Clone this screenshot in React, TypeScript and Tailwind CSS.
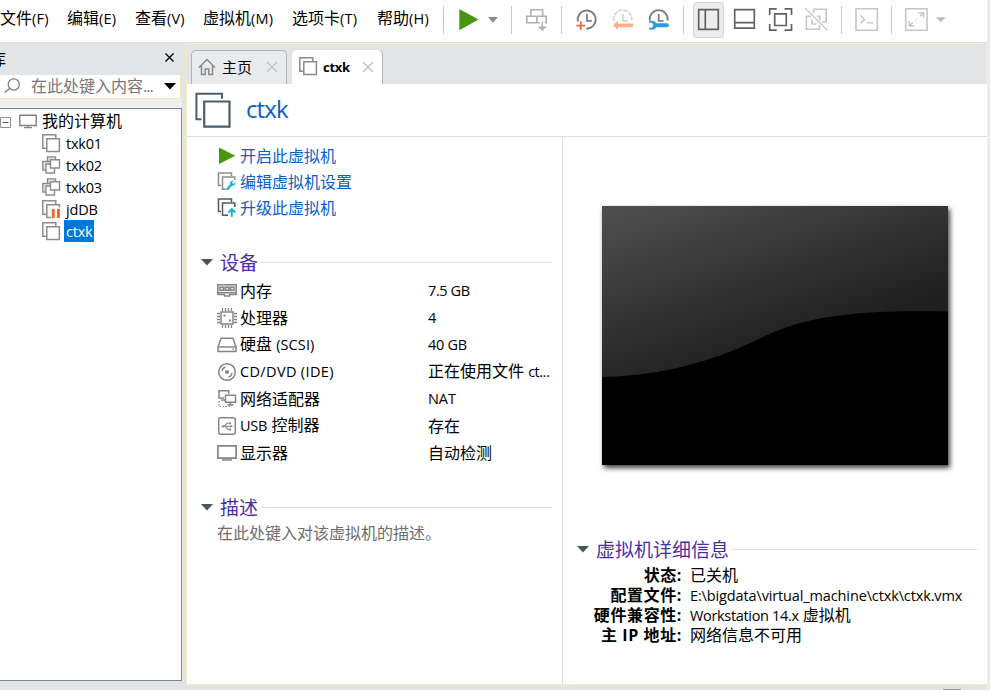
import type { ReactNode } from "react";

type Box = { x: number; y: number; w: number; h: number; children: ReactNode; className?: string };

/** Drawing surface whose units are window pixels. */
function Glyph({ x, y, w, h, children, className = "" }: Box) {
  return (
    <svg
      width={w}
      height={h}
      viewBox={`${x} ${y} ${w} ${h}`}
      fill="none"
      className={`block shrink-0 ${className}`}
    >
      {children}
    </svg>
  );
}

function Sep() {
  return <div className="mt-1.5 h-7 w-px shrink-0 bg-[#c9c9c9]" />;
}

const menus = [
  { text: "文件", key: "(F)", cls: "w-[67px]" },
  { text: "编辑", key: "(E)", cls: "w-[68px]" },
  { text: "查看", key: "(V)", cls: "w-[68px]" },
  { text: "虚拟机", key: "(M)", cls: "w-[89px]" },
  { text: "选项卡", key: "(T)", cls: "w-[85px]" },
  { text: "帮助", key: "(H)", cls: "w-[66px]" },
];

function Toolbar() {
  return (
    <header className="flex h-[42px] shrink-0 bg-white">
      <nav className="flex h-[37px] w-[443px] shrink-0 items-center">
        {menus.map((m) => (
          <div key={m.key} className={`shrink-0 whitespace-nowrap ${m.cls}`}>
            {m.text}
            <span className="text-[14.5px] tracking-[0.2px]">{m.key}</span>
          </div>
        ))}
      </nav>
      <Sep />
      <Glyph x={444} y={0} w={67} h={42}>
        <path d="M459.3 9v21.2L478.5 19.6z" fill="#48960c" />
        <path d="M488 17h10l-5 5.8z" fill="#8b8b8b" />
      </Glyph>
      <Sep />
      <Glyph x={512} y={0} w={49} h={42}>
        <g stroke="#b0b0b0" strokeWidth="1.6">
          <path d="M530.8 16V9.8h11.8V16M526.8 16.2h19.4v6.6h-19.4zM536.8 16.2v6.6" />
          <path d="M542.3 21v9" stroke="#fff" strokeWidth="5" />
          <path d="M542.3 21.5v7" />
        </g>
        <path d="M537.8 26.5h9l-4.5 4.6z" fill="#b0b0b0" />
      </Glyph>
      <Sep />
      <Glyph x={562} y={0} w={121} h={42}>
        <g strokeWidth="1.8">
          <path d="M577.9 21.5a9 9 0 1 1 8.5 7" stroke="#7d7d7d" />
          <path d="M587 14v6.8h4.8" stroke="#7d7d7d" />
          <path d="M580.8 21.3v9M576.4 25.6h8.8" stroke="#e8703a" />
          <path d="M613.8 20.5a9 9 0 1 1 17.8 0" stroke="#d3d3d3" strokeDasharray="4.2 1.2" />
          <path d="M622.8 14v6.8h4.8" stroke="#d3d3d3" />
          <path d="M649.8 20.5a9 9 0 1 1 17.8 0" stroke="#7d7d7d" />
          <path d="M658.7 14v6.8h4.8" stroke="#7d7d7d" />
        </g>
        <path d="M613 25.3l5-4.6v2.9h15v3.6h-15v2.8z" fill="#ffae88" />
        <path
          d="M649 21.2c3.6-1.2 6.6.2 7.4 2.100H667a1.900 1.900 0 0 1 0 3.900H656.400c-.8 2-3.800 3.300-7.400 2.100v-1.600h3.200l1-2.500-1-2.400H649z"
          fill="#2e9ae0"
        />
      </Glyph>
      <Sep />
      <div className="ml-[9px] mt-0.5 h-9 w-[31px] shrink-0 rounded-[4px] border border-[#d0d1d2] bg-[#ecedee]">
        <Glyph x={694} y={3} w={29} h={34}>
          <path d="M698.700 9.700h19.600v19.600h-19.600zM705.300 9.700v19.600" stroke="#636363" strokeWidth="1.7" />
        </Glyph>
      </div>
      <Glyph x={724} y={0} w={117} h={42}>
        <g stroke="#636363" strokeWidth="1.7">
          <path d="M734.700 9.700h19.600v18.400h-19.600zM734.700 22.700h19.600" />
          <path d="M769.700 15V8.900h7M784.500 8.900h7V15M791.500 24v6.200h-7M776.700 30.200h-7V24" />
          <path d="M774.700 13.900h11.600v11.600h-11.600z" />
        </g>
        <g stroke="#c6c6c6" strokeWidth="1.6">
          <path d="M813.500 9.200h12.700v12.600h-4.500M813.500 9.200v4M811 16.300h-4.600v13h13.100v-4.500M817 16.300h2.800v4M812 19.500v4.500h4.500" />
          <path d="M805 8l22.300 22.300" strokeWidth="1.3" />
        </g>
      </Glyph>
      <Sep />
      <Glyph x={842} y={0} w={49} h={42}>
        <g stroke="#c6c6c6" strokeWidth="1.6">
          <path d="M856 8.800h21.400v21.400H856z" />
          <path d="M860.500 15.500l4 4-4 4M867 22.800h6" />
        </g>
      </Glyph>
      <Sep />
      <Glyph x={892} y={0} w={95} h={42}>
        <g stroke="#c6c6c6" strokeWidth="1.6">
          <path d="M905.700 8.800h21.400v21.400h-21.400z" />
          <path d="M918.500 12.800h5v5M909.300 21v5h5M923 13.300l-3 3M909.800 25.500l3-3" />
          <path d="M914.500 20.800l3.500-3" strokeWidth="1" strokeDasharray="1.500 1" />
        </g>
        <path d="M936 17.200h9.600l-4.800 5z" fill="#b8b8b8" />
      </Glyph>
    </header>
  );
}

/** Pair of overlapping sheets, the mark of one virtual machine. */
function VmIcon({ stroke = "#8c8c8c", paused = false }: { stroke?: string; paused?: boolean }) {
  return (
    <Glyph x={0} y={0} w={19} h={19}>
      <path d="M4 14.300H.8V.8h13V4" stroke={stroke} strokeWidth="1.5" />
      <path d="M4.800 4.800h12.600v12.600H4.800z" stroke={stroke} strokeWidth="1.500" fill="#fff" />
      {paused && (
        <>
          <path d="M9 7.500h10V19H9z" fill="#fff" />
          <path d="M9.800 9h2.900v9H9.800zM15 9h2.900v9H15z" fill="#f26a21" />
        </>
      )}
    </Glyph>
  );
}

function CloneIcon() {
  return (
    <Glyph x={0} y={0} w={19} h={19}>
      <g stroke="#8c8c8c" strokeWidth="1.400" fill="#e4e4e4">
        <path d="M5.500.9h8v9h-8z" />
        <path d="M.8 5.500h9.500v8.500H.8z" />
        <path d="M4 8h8.500v9H4z" fill="#fff" />
        <path d="M8.500 3.700h9V12h-9z" fill="#fff" />
      </g>
    </Glyph>
  );
}

const machines = [
  { name: "txk01", icon: <VmIcon /> },
  { name: "txk02", icon: <CloneIcon /> },
  { name: "txk03", icon: <CloneIcon /> },
  { name: "jdDB", icon: <VmIcon paused /> },
  { name: "ctxk", icon: <VmIcon />, selected: true },
];

function Library() {
  return (
    <aside className="flex w-[186px] shrink-0 flex-col border-t border-[#dcddde] pb-[9px]">
      <div className="flex h-[32px] w-full shrink-0 items-center justify-between pr-[12px]">
        <span className="-ml-[10px]">库</span>
        <Glyph x={0} y={0} w={9} h={9} className="-mt-[3px]">
          <path d="M.5.500l8 8M8.500.500l-8 8" stroke="#000" strokeWidth="1.400" />
        </Glyph>
      </div>
      <div className="flex h-6 w-[181px] shrink-0 items-center border-b border-r border-[#f5e6bf] bg-white">
        <Glyph x={0} y={76} w={29} h={21}>
          <circle cx="13.800" cy="84.500" r="5.600" stroke="#808080" strokeWidth="1.300" />
          <path d="M9.800 88.500L4.500 92.500" stroke="#808080" strokeWidth="1.500" />
        </Glyph>
        <span className="ml-[2px] -mt-0.5 whitespace-nowrap leading-5 text-[#767676]">
          在此处键入内容<span className="tracking-[-1px]">...</span>
        </span>
        <svg width="12" height="7" className="ml-auto mr-[4px]">
          <path d="M0 0h12L6 6.500z" fill="#000" />
        </svg>
      </div>
      <div className="h-[9px] w-[182px] shrink-0 bg-[#f0f0f0]" />
      <div className="w-[182px] grow border-b border-r border-t border-[#828790] bg-white pt-px">
        <div className="flex h-[22px] items-center">
          <Glyph x={0} y={110} w={42} h={22}>
            <path d="M.5 117.500h10v10H.5z" stroke="#919191" fill="#fff" />
            <path d="M2.500 122.500h6" stroke="#3f5fae" />
            <path d="M19.800 115.200h16.400v10.300H19.800z" stroke="#808080" strokeWidth="1.400" />
            <path d="M28 125.500v2M24 127.700h8" stroke="#808080" strokeWidth="1.200" />
          </Glyph>
          <span>我的计算机</span>
        </div>
        {machines.map((m) => (
          <div key={m.name} className="flex h-[22px] items-center pl-[42px]">
            {m.icon}
            <span
              className={
                "ml-[3px] h-[22px] pl-[2px] pr-[1px] text-[14.500px] leading-[24px] tracking-[-0.200px] " +
                (m.selected ? "bg-[#0078d7] text-white" : "")
              }
            >
              {m.name}
            </span>
          </div>
        ))}
      </div>
    </aside>
  );
}

function CloseMark() {
  return (
    <svg width="12" height="12" className="block shrink-0">
      <path d="M1 1l10 10M11 1L1 11" stroke="#c4c4c4" strokeWidth="1.500" />
    </svg>
  );
}

function Tabs() {
  return (
    <div className="flex h-10 shrink-0 items-end bg-[#e3e4e6] pl-[4px]">
      <div className="flex h-[34px] w-[96px] items-center rounded-t-[5px] border-x border-t border-[#b4b5b7] bg-[#e9eaec] pb-[2px] pl-[6px]">
        <Glyph x={0} y={0} w={18} h={18}>
          <path
            d="M1 9.500L9 1.500l8 8M3.500 8v8.500h3.700V11h3.600v5.500h3.700V8"
            stroke="#8a8a8a"
            strokeWidth="1.500"
          />
        </Glyph>
        <span className="ml-[6px] w-[30px] whitespace-nowrap text-[15px]">主页</span>
        <div className="ml-[14px]">
          <CloseMark />
        </div>
      </div>
      <div className="ml-[5px] flex h-[34px] w-[91px] items-center rounded-t-[5px] border-r border-[#b4b5b7] bg-white pb-px pl-[7px]">
        <VmIcon />
        <span className="ml-[5px] w-[30px] text-[13px] font-bold tracking-[-0.300px]">ctxk</span>
        <div className="ml-[9px]">
          <CloseMark />
        </div>
      </div>
    </div>
  );
}

function Section({ title, className = "" }: { title: string; className?: string }) {
  return (
    <div className={`flex h-7 shrink-0 items-center ${className}`}>
      <svg width="12" height="7" className="-mt-px mr-[7px] block shrink-0">
        <path d="M0 0h12L6 6.500z" fill="#44565f" />
      </svg>
      <h2 className="whitespace-nowrap text-[19px] leading-7 text-[#4a2ea3]">{title}</h2>
      <div className="-mt-0.5 ml-[3px] h-px grow bg-[#dcdddf]" />
    </div>
  );
}

const actions = [
  {
    label: "开启此虚拟机",
    icon: <path d="M2 1.500v16.500L18.300 9.700z" fill="#48960c" />,
  },
  {
    label: "编辑虚拟机设置",
    icon: (
      <>
        <path d="M4 13.500H1.500V1h13v3M9 17.300H5.500V5h12.300v3" stroke="#8c8c8c" strokeWidth="1.500" />
        <path d="M10.500 17l4-4.500" stroke="#16b3d3" strokeWidth="2.400" strokeLinecap="round" />
        <path d="M18.500 10l-2 2-1.500-1.500 1.700-2c-2.700-.3-4.500 2-3.200 4.800 2.700 1.300 5.500-.5 5-3.300z" fill="#16b3d3" />
      </>
    ),
  },
  {
    label: "升级此虚拟机",
    icon: (
      <>
        <path d="M4 13.500H1.500V1h13v3M11 17.300H5.500V5h12.300v4" stroke="#4a5c68" strokeWidth="1.500" />
        <path d="M14.800 18.800v-7M11.300 14.500l3.500-3.500 3.500 3.500" stroke="#16b3d3" strokeWidth="1.900" />
      </>
    ),
  },
];

const devices = [
  {
    name: <>内存</>,
    value: <span className="text-[14.500px] tracking-[-0.400px]">7.5 GB</span>,
    icon: (
      <>
        <path d="M.800 3.800h18.400v8H.800z" fill="#ededed" />
        <path d="M3 6.300h3.500v2.900H3zM8.300 6.300h3.500v2.900H8.300zM13.500 6.300H17v2.900h-3.500zM1 13.500h6.500v1.500h5v-1.500H19" />
        <path d="M.800 11v3M19.200 11v3" />
      </>
    ),
  },
  {
    name: <>处理器</>,
    value: <span className="text-[14.500px]">4</span>,
    icon: (
      <>
        <path d="M4 4h12v12H4z" />
        <path
          d="M5.500 0v3M8.500 0v3M11.500 0v3M14.500 0v3M5.500 17v3M8.500 17v3M11.500 17v3M14.500 17v3M0 5.500h3M0 8.500h3M0 11.500h3M0 14.500h3M17 5.500h3M17 8.500h3M17 11.500h3M17 14.500h3"
          strokeWidth="1.300"
        />
        <path d="M6.500 7.500h2M12 12.500h2" strokeWidth="2" />
      </>
    ),
  },
  {
    name: (
      <>
        硬盘 <span className="text-[14.500px] tracking-[0.100px]">(SCSI)</span>
      </>
    ),
    value: <span className="text-[14.500px] tracking-[-0.300px]">40 GB</span>,
    icon: (
      <>
        <path d="M1 12L4 3.300h12L19 12v4.500H1zM1 12h18" />
        <path d="M15.500 14.300h1.500" />
      </>
    ),
  },
  {
    name: <span className="text-[14.500px] tracking-[0.350px]">CD/DVD (IDE)</span>,
    value: (
      <>
        正在使用文件 <span className="text-[14.500px] tracking-[-0.500px]">ct...</span>
      </>
    ),
    icon: (
      <>
        <circle cx="10" cy="10" r="8.300" />
        <circle cx="10" cy="10" r="1.200" strokeWidth="1.800" />
        <path d="M5 9a5 5 0 0 1 3.500-4M15 11a5 5 0 0 1-3.500 4" />
      </>
    ),
  },
  {
    name: <>网络适配器</>,
    value: <span className="text-[14.500px] tracking-[-0.100px]">NAT</span>,
    icon: (
      <>
        <path d="M7 9H2V1.800h9.800V5M4 11h4" />
        <path d="M8.500 6.300h10v7h-10zM13.500 13.300v2.500M10.500 16h6" />
        <path d="M2 12v5.500h11" strokeDasharray="1.500 1.500" strokeWidth="1.200" />
      </>
    ),
  },
  {
    name: (
      <>
        <span className="text-[14.500px] tracking-[-0.200px]">USB</span> 控制器
      </>
    ),
    value: <>存在</>,
    icon: (
      <>
        <rect x="1.700" y="1.700" width="16.600" height="16.600" rx="2" />
        <path d="M5 10.300h10M7 10.300l3-3h2.500M8.500 10.300l2.500 3.200h2" strokeWidth="1.100" />
        <path d="M4 10.300l2.500-1.600v3.200zM13.500 9l2.500 1.300-2.500 1.300z" fill="#858585" stroke="none" />
        <path d="M12.300 6.400h1.800v1.800h-1.800zM12.300 12.600h1.800v1.800h-1.800z" fill="#858585" stroke="none" />
      </>
    ),
  },
  {
    name: <>显示器</>,
    value: <>自动检测</>,
    icon: (
      <>
        <path d="M.900 2.800h18.200v12.400H.900z" strokeWidth="1.700" />
        <path d="M5 17h10" />
      </>
    ),
  },
];

function Summary() {
  return (
    <div className="flex w-[375px] shrink-0 flex-col pr-[10px] pt-[6px]">
      <ul>
        {actions.map((a) => (
          <li key={a.label} className="flex h-[26px] items-center pl-[30px] text-[#0b5ec4]">
            <svg width="20" height="20" viewBox="0 0 20 20" fill="none" className="mr-[3px] block shrink-0">
              {a.icon}
            </svg>
            {a.label}
          </li>
        ))}
      </ul>
      <Section title="设备" className="ml-[14px] mt-[28px]" />
      <ul>
        {devices.map((d, i) => (
          <li key={i} className="flex h-[27px] items-center whitespace-nowrap pl-[30px]">
            <svg
              width="20"
              height="20"
              viewBox="0 0 20 20"
              fill="none"
              stroke="#858585"
              strokeWidth="1.500"
              className="mr-[3px] block shrink-0"
            >
              {d.icon}
            </svg>
            <span className="w-[188px]">{d.name}</span>
            <span>{d.value}</span>
          </li>
        ))}
      </ul>
      <Section title="描述" className="ml-[14px] mt-[28px]" />
      <p className="-mt-px ml-[30px] text-[#6d6d6d]">在此处键入对该虚拟机的描述。</p>
    </div>
  );
}

function Screen() {
  return (
    <svg
      width="346"
      height="259"
      viewBox="602 206 346 259"
      className="ml-[39px] mt-[69px] block shrink-0 bg-black shadow-[2px_3px_5px_rgba(0,0,0,0.75)]"
    >
      <defs>
        <linearGradient id="sheen" gradientUnits="userSpaceOnUse" x1="640" y1="206" x2="700" y2="380">
          <stop offset="0" stopColor="#4d4d4d" />
          <stop offset="1" stopColor="#1f1f1f" />
        </linearGradient>
      </defs>
      <path
        d="M602 206h346v105.500C880 310 812 312 763 337 712 362 660 376 602 377z"
        fill="url(#sheen)"
      />
    </svg>
  );
}

const details = [
  { label: "状态:", value: <>已关机</> },
  {
    label: "配置文件:",
    value: <span className="text-[14.500px] tracking-[-0.130px]">E:\bigdata\virtual_machine\ctxk\ctxk.vmx</span>,
  },
  {
    label: "硬件兼容性:",
    value: (
      <>
        <span className="text-[14.500px] tracking-[-0.330px]">Workstation 14.x</span> 虚拟机
      </>
    ),
  },
  { label: "主 IP 地址:", value: <>网络信息不可用</> },
];

function Preview() {
  return (
    <div className="flex grow flex-col border-l border-[#dcdddf]">
      <Screen />
      <Section title="虚拟机详细信息" className="ml-[14px] mr-[10px] mt-[71px]" />
      <dl className="mt-px">
        {details.map((d) => (
          <div key={d.label} className="flex h-5 items-center whitespace-nowrap leading-5">
            <dt className="w-[119px] text-right text-[16px] font-bold tracking-[0.600px]">{d.label}</dt>
            <dd className="ml-[8px]">{d.value}</dd>
          </div>
        ))}
      </dl>
    </div>
  );
}

export default function App() {
  return (
    <div className="flex h-[690px] w-[990px] overflow-hidden bg-white font-['Open_Sans','Noto_Sans_CJK_SC',sans-serif] text-[16px] leading-6 text-black">
      <div className="flex w-[987px] shrink-0 flex-col">
        <Toolbar />
        <div className="flex min-h-0 grow bg-[#e3e4e6]">
          <Library />
          <div className="flex grow flex-col">
            <div className="h-px shrink-0 bg-[#dcddde]" />
            <main className="flex h-[642px] shrink-0 flex-col border-b border-l border-t border-[#f8edc0] bg-white">
              <Tabs />
              <div className="flex h-[53px] shrink-0 items-center border-b border-[#dcdddf]">
                <Glyph x={187} y={84} w={59} h={52}>
                  <path d="M201.500 119.200H196.400V93.700H222v5" stroke="#4b5e6b" strokeWidth="2" />
                  <path d="M204.200 101.500h25.300v25.200h-25.300z" stroke="#4b5e6b" strokeWidth="2.200" />
                </Glyph>
                <h1 className="-mt-0.5 text-[24px] tracking-[-0.900px] text-[#0b5ec4]">ctxk</h1>
              </div>
              <div className="flex grow">
                <Summary />
                <Preview />
              </div>
            </main>
            <div className="mr-[26px] mt-auto h-px w-[18px] shrink-0 self-end bg-[#8f8f8f]" />
          </div>
        </div>
      </div>
      <div className="w-[3px] shrink-0 border-l border-[#f3f3f3] bg-[#e8e8e9]" />
    </div>
  );
}
